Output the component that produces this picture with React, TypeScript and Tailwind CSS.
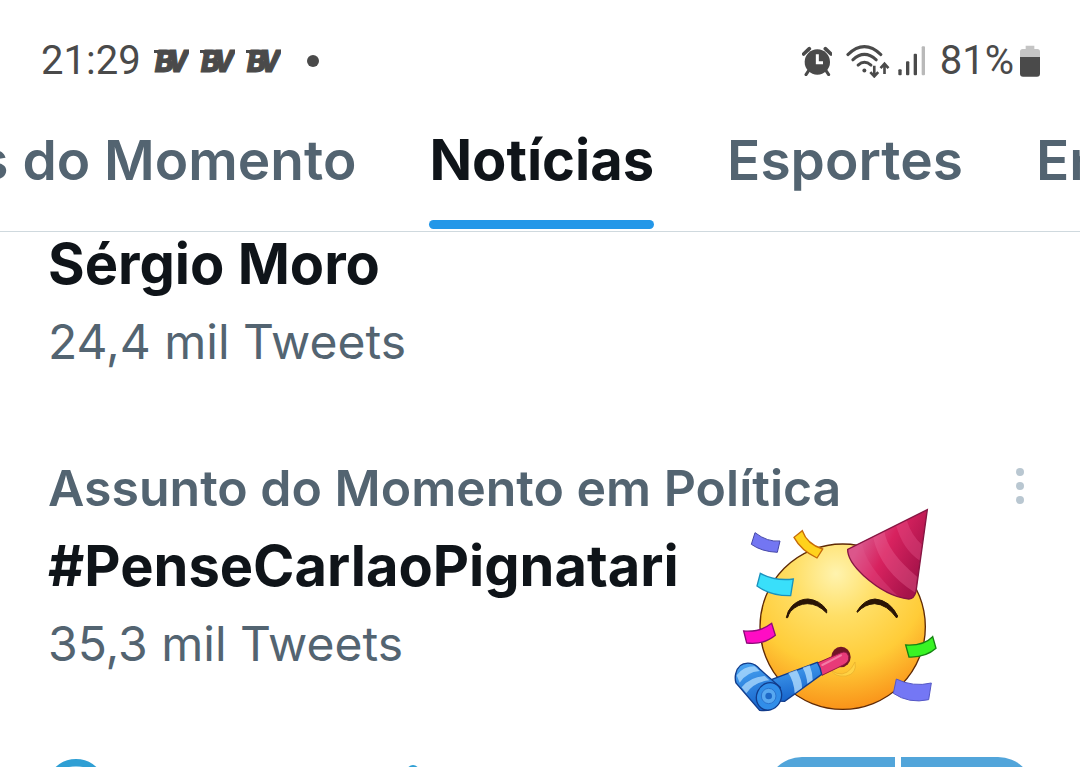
import { clsx } from "clsx";

const tabs = ["Assuntos do Momento", "Notícias", "Esportes", "Entretenimento"];

function BVLogo() {
  return (
    <svg
      viewBox="0 0 36 40"
      className="h-10 w-9"
      fill="#4a4a4a"
      stroke="#4a4a4a"
      fontFamily="Roboto, sans-serif"
      fontSize="31"
      fontWeight="900"
      fontStyle="italic"
    >
      <path d="M1 9H10L9 14H5L4 12H1z" stroke="none" />
      <text x="2" y="31" strokeWidth="1">
        B
      </text>
      <text x="15" y="31" strokeWidth="1">
        V
      </text>
    </svg>
  );
}

function AlarmIcon() {
  return (
    <svg viewBox="0 0 90 90" className="h-[30px] w-[30px]" aria-hidden="true">
      <circle cx="46" cy="48" r="38" fill="#4a4a4a" />
      <path d="M5 24 22 8M87 24 70 8" stroke="#4a4a4a" strokeWidth="11" strokeLinecap="round" />
      <path d="M20 74 12 86M72 74 80 86" stroke="#4a4a4a" strokeWidth="9" strokeLinecap="round" />
      <path d="M46 25V50H63" fill="none" stroke="#fff" strokeWidth="9" />
    </svg>
  );
}

function WifiIcon() {
  return (
    <svg viewBox="0 0 132 100" className="h-[33px] w-[44px]" fill="none" stroke="#4a4a4a" aria-hidden="true">
      <path d="M5 29Q55 -19 105 29" strokeWidth="9" strokeLinecap="round" />
      <path d="M20 45Q55 12 91 45" strokeWidth="9" strokeLinecap="round" />
      <path d="M36 61Q55 44 75 61" strokeWidth="9" strokeLinecap="round" />
      <circle cx="55" cy="77" r="6" fill="#4a4a4a" stroke="none" />
      <path d="M85 63V93M73 82 85 95 97 82M116 88V58M104 70 116 57 128 70" strokeWidth="8" />
    </svg>
  );
}

function SignalIcon() {
  return (
    <svg viewBox="0 0 84 90" className="h-[30px] w-[28px]" aria-hidden="true">
      <rect x="1" y="70" width="10" height="18" rx="3" fill="#4a4a4a" />
      <rect x="24" y="46" width="10" height="42" rx="3" fill="#4a4a4a" />
      <rect x="47" y="23" width="10" height="65" rx="3" fill="#4a4a4a" />
      <rect x="71" y="1" width="10" height="87" rx="3" fill="#b9b9b9" />
    </svg>
  );
}

function BatteryIcon() {
  return (
    <svg viewBox="0 0 60 96" className="h-[32px] w-[20px]" aria-hidden="true">
      <path d="M17 2h26v10h9q8 0 8 8v17H0V20q0-8 8-8h9z" fill="#c4c4c4" />
      <path d="M0 36h60v50q0 9-9 9H9q-9 0-9-9z" fill="#4a4a4a" />
    </svg>
  );
}

function PartyFace() {
  return (
    <svg
      viewBox="0 0 690 675"
      className="absolute top-[44px] right-[130px] h-[225px] w-[230px]"
      role="img"
      aria-label="Festa"
    >
      <defs>
        <radialGradient id="face" cx="0.46" cy="0.18" r="0.85">
          <stop offset="0" stopColor="#fff3ae" />
          <stop offset="0.3" stopColor="#ffdf67" />
          <stop offset="0.65" stopColor="#ffcc38" />
          <stop offset="1" stopColor="#f98d16" />
        </radialGradient>
        <linearGradient id="hat" x1="0.2" y1="0.3" x2="0.9" y2="0.7">
          <stop offset="0" stopColor="#d9558a" />
          <stop offset="0.4" stopColor="#d8225f" />
          <stop offset="1" stopColor="#a6134a" />
        </linearGradient>
        <linearGradient id="horn" x1="0" y1="0" x2="0.3" y2="1">
          <stop offset="0" stopColor="#4ba8f5" />
          <stop offset="1" stopColor="#1765cc" />
        </linearGradient>
        <clipPath id="hatShape">
          <path d="M622 29 383 148Q382 182 431 227 501 290 567 297 582 297 588 275z" />
        </clipPath>
      </defs>

      <circle cx="368" cy="380" r="248" fill="url(#face)" stroke="#5f2a06" strokeWidth="4" />

      {/* Eyes */}
      <path d="M199 353Q202 332 218 316 239 297 264 297 299 300 320 330V339Q293 311 262 311 232 312 212 334 206 342 203 353z" fill="#2a1405" stroke="#2a1405" strokeWidth="3" />
      <path d="M411 334Q431 299 465 297 510 301 533 348L530 354Q501 313 464 311 435 312 412 337z" fill="#2a1405" stroke="#2a1405" strokeWidth="3" />

      {/* Mouth */}
      <path d="M334 512Q369 535 394 505L405 486Q412 521 378 528 345 531 334 512z" fill="#ffd244" stroke="#e5ac2c" strokeWidth="2" />
      <ellipse cx="363" cy="471" rx="29" ry="31" fill="#731526" />

      {/* Party horn */}
      <path d="M290 490 363 458Q381 451 386 469 389 486 370 495L306 526z" fill="#e83a78" stroke="#8f1543" strokeWidth="3" />
      <path d="M307 495 363 466" stroke="#f47ba4" strokeWidth="6" strokeLinecap="round" />
      <path d="M148 541 292 487Q302 503 305 523L194 604 126 602z" fill="url(#horn)" stroke="#123c8b" strokeWidth="4" />
      <path d="M205 519 230 510Q247 542 246 564L224 580Q222 544 205 519zM248 503 269 496Q278 519 278 540L262 551Q260 525 248 503z" fill="#b9e1ff" opacity=".75" />
      <path d="M47 522Q55 485 92 490 106 492 119 507L181 562 153 629Q138 633 119 631L48 549Q44 536 47 522z" fill="url(#horn)" stroke="#123c8b" strokeWidth="4" />
      <path d="M50 526Q69 499 104 499L119 513Q80 516 59 548zM65 562Q90 531 134 528L148 541Q102 546 79 580z" fill="#b9e1ff" opacity=".7" />
      <ellipse cx="147" cy="589" rx="37" ry="42" fill="#318ee9" stroke="#123c8b" strokeWidth="4" transform="rotate(25 147 589)" />
      <ellipse cx="146" cy="588" rx="22" ry="23" fill="#58a8f0" stroke="#2a74cf" strokeWidth="3" />
      <circle cx="146" cy="588" r="10" fill="#1d69c8" />

      {/* Hat */}
      <path d="M622 29 383 148Q382 182 431 227 501 290 567 297 582 297 588 275z" fill="url(#hat)" />
      <g clipPath="url(#hatShape)">
        <path d="M426 125Q430 193 553 306L515 306 408 230 383 148z" fill="#e3588d" opacity=".3" />
        <path d="M459 110 493 94Q502 156 591 230L587 279Q480 212 459 110z" fill="#ed6b9c" opacity=".35" />
        <path d="M528 75 560 60Q575 108 606 134L600 182Q548 149 528 75z" fill="#e85990" opacity=".35" />
      </g>
      <path d="M622 29 383 148Q382 182 431 227 501 290 567 297 582 297 588 275z" fill="none" stroke="#861542" strokeWidth="4" />

      {/* Confetti */}
      <path d="M105 98Q143 127 180 123L172 157Q125 155 94 133z" fill="#7376f2" stroke="#4446a8" strokeWidth="3" />
      <path d="M247 92Q261 132 308 147L291 174Q243 151 222 112z" fill="#ffd21c" stroke="#c66b08" strokeWidth="4" />
      <path d="M121 220Q165 244 220 237L212 287Q153 288 111 258z" fill="#39dffa" stroke="#1a91bd" strokeWidth="4" />
      <path d="M71 393Q120 397 155 370L166 406Q132 435 80 429z" fill="#ff0cc4" stroke="#8c0979" strokeWidth="4" />
      <path d="M557 435Q611 438 638 410L648 445Q617 473 567 471z" fill="#38f424" stroke="#168313" strokeWidth="4" />
      <path d="M529 537Q579 562 634 549L626 599Q567 612 520 580z" fill="#7477f5" stroke="#5558c5" strokeWidth="3" />
    </svg>
  );
}

function StatusBar() {
  return (
    <header className="flex h-[122px] shrink-0 items-center justify-between pr-10 pl-[41px] font-[Roboto,sans-serif] text-[40px] leading-none text-[#4a4a4a]">
      <div className="flex items-center">
        <span>21:29</span>
        <div className="ml-3 flex gap-[10px]">
          <BVLogo />
          <BVLogo />
          <BVLogo />
        </div>
        <span className="ml-[26px] size-3 rounded-full bg-[#4a4a4a]" />
      </div>
      <div className="flex items-center">
        <AlarmIcon />
        <span className="ml-[14px] flex">
          <WifiIcon />
        </span>
        <span className="ml-2 flex">
          <SignalIcon />
        </span>
        <span className="mr-[6px] ml-[14px]">81%</span>
        <BatteryIcon />
      </div>
    </header>
  );
}

function Tabs() {
  return (
    <nav className="flex h-[110px] shrink-0 gap-[73px] overflow-hidden border-b border-[#cfd9de] leading-[76px] whitespace-nowrap">
      {tabs.map((tab, i) => {
        const active = tab === "Notícias";
        return (
          <button
            key={tab}
            className={clsx(
              "flex shrink-0 flex-col justify-between pb-[2px]",
              i === 0 && "w-[33%] items-end",
              active ? "text-[56px] font-bold text-[#0f1419]" : "text-[55px] font-semibold text-[#536471]"
            )}
          >
            <span>{tab}</span>
            {active && <span className="h-[9px] w-full rounded-full bg-[#2397e8]" />}
          </button>
        );
      })}
    </nav>
  );
}

export default function App() {
  return (
    <div className="flex h-screen flex-col overflow-hidden bg-white font-[Inter,sans-serif] text-[#0f1419]">
      <StatusBar />
      <Tabs />

      <main className="flex flex-col leading-[64px]">
        <article className="flex flex-col gap-[14px] px-12">
          <h2 className="text-[56px] font-bold">Sérgio Moro</h2>
          <p className="text-[48px] text-[#536471]">24,4 mil Tweets</p>
        </article>

        <article className="relative mt-[82px] flex flex-col gap-[14px] px-12">
          <div className="flex items-center justify-between">
            <p className="text-[50px] font-semibold text-[#536471]">Assunto do Momento em Política</p>
            <button aria-label="Mais opções" className="flex w-6 flex-col items-center gap-[6px] pb-1">
              <span className="size-2 rounded-full bg-[#b9c7d1]" />
              <span className="size-2 rounded-full bg-[#b9c7d1]" />
              <span className="size-2 rounded-full bg-[#b9c7d1]" />
            </button>
          </div>
          <h2 className="text-[56px] font-bold">#PenseCarlaoPignatari</h2>
          <p className="text-[48px] text-[#536471]">35,3 mil Tweets</p>
          <PartyFace />
        </article>

        <div className="mt-[81px] flex items-start justify-between px-[46px]">
          <div className="flex items-start gap-[301px]">
            <span className="mt-[2px] size-[60px] rounded-full border-[7px] border-[#2f9fd4] bg-[#9ad0ec]" />
            <span className="mt-2 size-3 rounded-full bg-[#2f9fd4]" />
          </div>
          <div className="flex gap-[6px]">
            <button aria-label="Anterior" className="h-[72px] w-[129px] rounded-l-full bg-[#52a5da]" />
            <button aria-label="Próximo" className="h-[72px] w-[133px] rounded-r-full bg-[#52a5da]" />
          </div>
        </div>
      </main>
    </div>
  );
}
